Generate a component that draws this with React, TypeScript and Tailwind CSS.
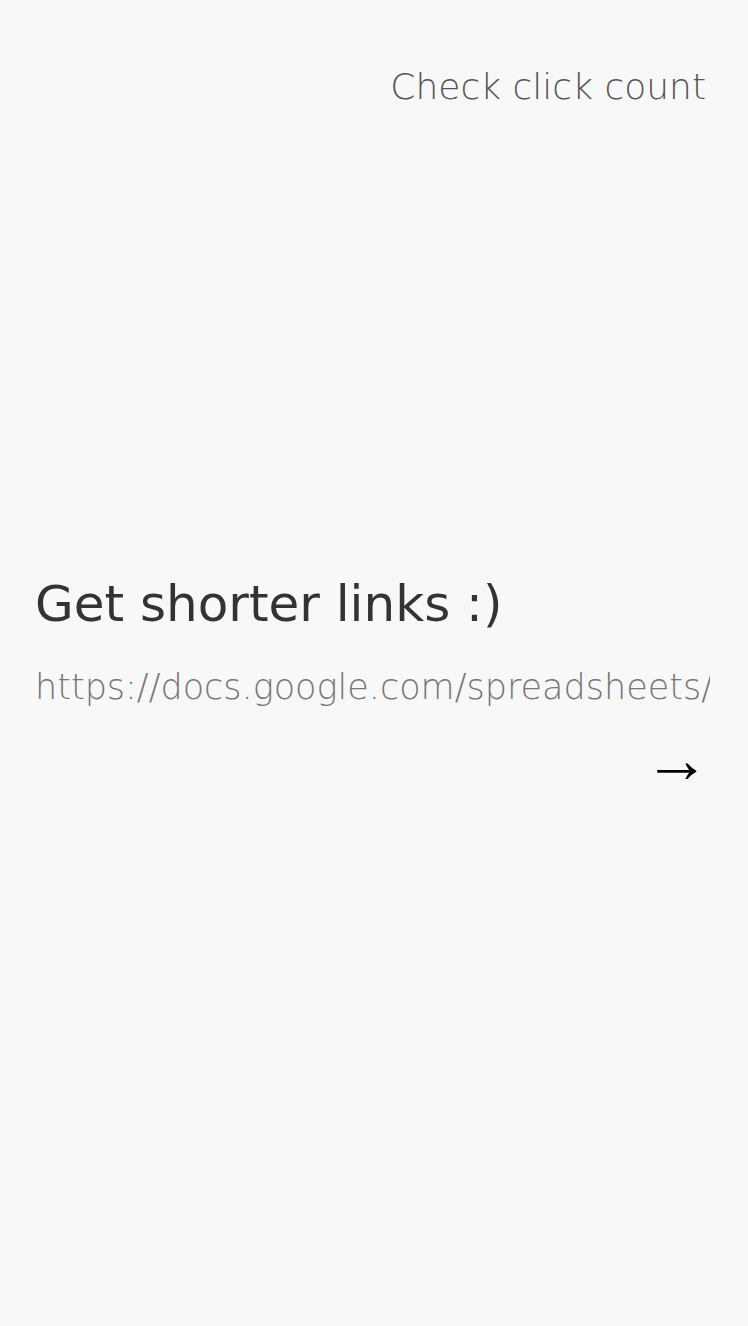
import React from "react";

export default function App() {
  return (
    <div className="min-h-[1326px] w-full bg-[#f8f8f8] font-['DejaVu_Sans',sans-serif] flex flex-col">
      <header className="flex justify-end pt-[64px] pr-[42px]">
        <a className="text-[36px] leading-[46px] font-extralight text-[#555] cursor-pointer">Check click count</a>
      </header>
      <main className="pt-[462px] pl-[35px] pr-[38px]">
        <h1 className="text-[50px] leading-[64px] font-normal text-[#333]">Get shorter links :)</h1>
        <input
          readOnly
          value="https://docs.google.com/spreadsheets/d/1BxiMVs0XRA5nFMdKvBdBZjgmUUqptlbs74OgvE2upms/edit"
          className="mt-[28px] w-full bg-transparent text-[35px] leading-[46px] font-extralight text-[#777] outline-none"
        />
        <div className="flex justify-end mt-[19px]">
          <button className="font-['Liberation_Sans',sans-serif] text-[66px] leading-[60px] font-normal text-black pr-0">→</button>
        </div>
      </main>
    </div>
  );
}
